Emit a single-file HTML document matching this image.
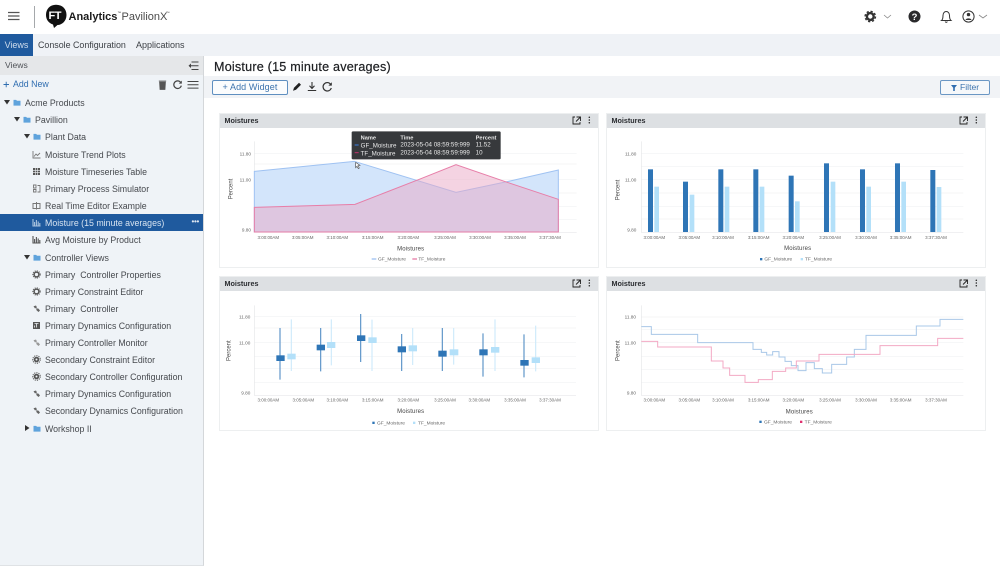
<!DOCTYPE html>
<html lang="en"><head><meta charset="utf-8"><title>Moisture (15 minute averages)</title>
<style>
html,body{margin:0;padding:0;background:#fff}
body{width:1000px;height:577px;overflow:hidden;position:relative;font-family:"Liberation Sans",sans-serif;color:#3d4146}
#wrap{position:absolute;left:0;top:0;width:1000px;height:577px;filter:blur(.35px);overflow:hidden}
.a{position:absolute;white-space:nowrap}
.r{position:absolute;left:0;width:203px;height:17px;line-height:18.5px;font-size:8.8px;color:#46494e;white-space:pre}
.r span{position:absolute;left:45px;top:0}
.r svg{position:absolute;top:4px;left:32px;width:9px;height:9px}
.f span{left:0}
.sel{background:#1f5a9e;color:#d7e3f0}
.card{position:absolute;width:380px;height:155px;border:1px solid #edeff0;background:#fff;box-sizing:border-box}
.card .h{position:absolute;left:0;top:0;right:0;height:14px;background:#dde0e3;font-size:7.2px;font-weight:bold;line-height:14px;color:#2a2c30;padding-left:4.5px}
svg text{font-family:"Liberation Sans",sans-serif}
</style></head><body><div id="wrap">

<svg width="0" height="0" style="position:absolute">
<defs>
<symbol id="line" viewBox="0 0 9 9"><path d="M1 1V8H8.5M2 6.5L4 4L5.5 5.5L8 3" fill="none" stroke="#777" stroke-width=".9"/></symbol>
<symbol id="grid" viewBox="0 0 9 9"><path d="M1 1H8V8H1Z" fill="#555"/><path d="M1 3.4H8M1 5.6H8M3.4 1V8M5.6 1V8" stroke="#f0f3f7" stroke-width=".6"/></symbol>
<symbol id="sim" viewBox="0 0 9 9"><path d="M1.5 1H4V4H1.5ZM1.5 5.5H4V8H1.5ZM5.5 1.5H8V8H5.5" fill="none" stroke="#777" stroke-width=".9"/></symbol>
<symbol id="rt" viewBox="0 0 9 9"><path d="M1 2.5H8V7.5H1ZM4.5 1V8.5" fill="none" stroke="#777" stroke-width="1"/></symbol>
<symbol id="bars" viewBox="0 0 9 9"><path d="M1 1V8H8.5M2.6 7.5V4M4.4 7.5V2M6.2 7.5V3.5M7.8 7.5V5" fill="none" stroke="currentColor" stroke-width="1.1"/></symbol>
<symbol id="gear" viewBox="0 0 9 9"><circle cx="4.5" cy="4.5" r="2.4" fill="none" stroke="#555" stroke-width="1.5"/><circle cx="4.5" cy="4.5" r="3.7" fill="none" stroke="#555" stroke-width=".9" stroke-dasharray="1.1 1.1"/></symbol>
<symbol id="gear2" viewBox="0 0 9 9"><circle cx="4.5" cy="4.5" r="2.8" fill="#555"/><circle cx="4.5" cy="4.5" r="3.8" fill="none" stroke="#555" stroke-width="1" stroke-dasharray="1.2 1"/><circle cx="4.5" cy="4.5" r="1" fill="#eef2f6"/></symbol>
<symbol id="wr" viewBox="0 0 9 9"><path d="M1.5 2.2L4 1.5L5 3.5L3 4.5ZM4 4.3L6.5 4.6L8 6.5L6.5 8L4.6 6.4Z" fill="#666"/></symbol>
<symbol id="wrl" viewBox="0 0 9 9"><path d="M1.5 2.2L4 1.5L5 3.5L3 4.5ZM4 4.3L6.5 4.6L8 6.5L6.5 8L4.6 6.4Z" fill="#999"/></symbol>
<symbol id="dyn" viewBox="0 0 9 9"><path d="M1 1H8V8H1Z" fill="#555"/><path d="M2.5 6.5V4.5M4.5 6.5V2.5M6.5 2.5L2.5 2.5" stroke="#eef2f6" stroke-width=".8"/></symbol>
<symbol id="fold" viewBox="0 0 9 8"><path d="M.5 1H3.5L4.5 2H8.5V7.5H.5Z" fill="#5fa3dc"/></symbol>
</defs></svg>

<!-- top header -->
<svg class="a" style="left:0;top:0" width="1000" height="34">
<path d="M8 12.5H19.5M8 16H19.5M8 19.5H19.5" stroke="#555" stroke-width="1.3"/>
<path d="M34.5 6V28" stroke="#8f9296" stroke-width=".8"/>
<path d="M56 4.8C62.5 4.8 66.5 9 66.5 15C66.5 21 62 25 57.5 25L54 28L53 24.5C48.5 23 46 19.5 46 15C46 9 50 4.8 56 4.8Z" fill="#111"/>
<text x="48.5" y="19" font-size="11" font-weight="bold" fill="#fff" letter-spacing="-.5">FT</text>
<text x="68.5" y="20" font-size="11" font-weight="bold" fill="#1c1c1c">Analytics</text>
<text x="117.5" y="14" font-size="3.5" fill="#333">™</text>
<text x="121.5" y="20" font-size="11" fill="#4b4b4b">PavilionX</text>
<text x="166" y="14" font-size="3.5" fill="#333">™</text>
<!-- gear -->
<circle cx="870.3" cy="16.5" r="3.4" fill="none" stroke="#333" stroke-width="2.4"/>
<circle cx="870.3" cy="16.5" r="5.2" fill="none" stroke="#333" stroke-width="1.4" stroke-dasharray="2.2 1.9"/>
<path d="M884 15L887.5 18L891 15" fill="none" stroke="#888" stroke-width=".8"/>
<circle cx="914.5" cy="16.5" r="6" fill="#2a2a2c"/>
<text x="914.5" y="20" font-size="9.5" font-weight="bold" fill="#fff" text-anchor="middle">?</text>
<path d="M941.5 20.5C942.8 19.5 943 18 943 15.5C943 13 944.5 11.5 946.2 11.5C948 11.5 949.5 13 949.5 15.5C949.5 18 949.8 19.5 951 20.5ZM945.2 21.5C945.5 22.6 947 22.6 947.3 21.5" fill="none" stroke="#333" stroke-width="1"/>
<circle cx="968.5" cy="16.5" r="5.6" fill="none" stroke="#333" stroke-width="1"/>
<circle cx="968.5" cy="14.6" r="1.7" fill="#333"/><path d="M965.5 20C966 17.8 971 17.8 971.5 20Z" fill="#333"/>
<path d="M979 15L983 18L987 15" fill="none" stroke="#888" stroke-width=".8"/>
</svg>

<!-- nav -->
<div class="a" style="left:0;top:34px;width:1000px;height:22px;background:#eff2f6"></div>
<div class="a" style="left:0;top:34px;width:33px;height:22px;background:#1f5a9e;color:#cfdcec;font-size:9px;line-height:22.5px;text-align:center">Views</div>
<div class="a" style="left:38px;top:34px;line-height:22.5px;font-size:8.9px;color:#3d4146">Console Configuration</div>
<div class="a" style="left:136px;top:34px;line-height:22.5px;font-size:9px;color:#3d4146">Applications</div>

<!-- sidebar -->
<div class="a" style="left:0;top:56px;width:203px;height:509px;background:#eff3f7;border-right:1px solid #d4d7da;border-bottom:1.5px solid #dfe2e5"></div>
<div class="a" style="left:0;top:56px;width:203px;height:19px;background:#e5e7e9;font-size:8.6px;line-height:19.5px;color:#505358;text-indent:5px">Views</div>
<svg class="a" style="left:0;top:56px" width="203" height="50">
<path d="M191.5 6H198.5M189 9.8H198.5M191.5 13.5H198.5" stroke="#444" stroke-width="1"/><path d="M191 7.5L188.5 9.8L191 12" fill="#444"/>
<path d="M3.5 28.5H9M6.2 25.7V31.2" stroke="#2f6db0" stroke-width=".9"/>
<path d="M159.5 26H165.5L165 33.5H160ZM158.8 25H166.2" fill="#555" stroke="#555" stroke-width=".7"/>
<path d="M180.5 26.2A3.8 3.8 0 1 0 181.3 29.6" fill="none" stroke="#444" stroke-width="1.2"/><path d="M181.8 24.6V27.6H178.8Z" fill="#444"/>
<path d="M187.5 25.5H198.5M187.5 28.8H198.5M187.5 32.1H198.5" stroke="#444" stroke-width="1"/>
</svg>
<div class="a" style="left:13px;top:79px;font-size:8.8px;line-height:11px;color:#2f6db0">Add New</div>

<div class="r f" style="top:94px"><svg style="left:4px;top:6px;width:6px;height:5px" viewBox="0 0 6 5"><path d="M0 0H6L3 4.5Z" fill="#333"/></svg><svg style="left:13px;top:5px;width:8px;height:7px" viewBox="0 0 9 8"><use href="#fold"/></svg><span style="left:25px">Acme Products</span></div>
<div class="r f" style="top:111px"><svg style="left:14px;top:6px;width:6px;height:5px" viewBox="0 0 6 5"><path d="M0 0H6L3 4.5Z" fill="#333"/></svg><svg style="left:23px;top:5px;width:8px;height:7px" viewBox="0 0 9 8"><use href="#fold"/></svg><span style="left:35px">Pavillion</span></div>
<div class="r" style="top:128px"><svg style="left:24px;top:6px;width:6px;height:5px" viewBox="0 0 6 5"><path d="M0 0H6L3 4.5Z" fill="#333"/></svg><svg style="left:32.5px;top:5px;width:8px;height:7px" viewBox="0 0 9 8"><use href="#fold"/></svg><span>Plant Data</span></div>
<div class="r" style="top:145.5px"><svg viewBox="0 0 9 9"><use href="#line"/></svg><span>Moisture Trend Plots</span></div>
<div class="r" style="top:162.5px"><svg viewBox="0 0 9 9"><use href="#grid"/></svg><span>Moisture Timeseries Table</span></div>
<div class="r" style="top:179.5px"><svg viewBox="0 0 9 9"><use href="#sim"/></svg><span>Primary Process Simulator</span></div>
<div class="r" style="top:197px"><svg viewBox="0 0 9 9"><use href="#rt"/></svg><span>Real Time Editor Example</span></div>
<div class="r sel" style="top:214px"><svg viewBox="0 0 9 9" style="color:#a9c3de"><use href="#bars"/></svg><span>Moisture (15 minute averages)</span><span style="left:191.5px;top:-1px;color:#dfe8f2;font-size:8px;letter-spacing:-.3px">•••</span></div>
<div class="r" style="top:231px"><svg viewBox="0 0 9 9" style="color:#555"><use href="#bars"/></svg><span>Avg Moisture by Product</span></div>
<div class="r" style="top:248.5px"><svg style="left:24px;top:6px;width:6px;height:5px" viewBox="0 0 6 5"><path d="M0 0H6L3 4.5Z" fill="#333"/></svg><svg style="left:32.5px;top:5px;width:8px;height:7px" viewBox="0 0 9 8"><use href="#fold"/></svg><span>Controller Views</span></div>
<div class="r" style="top:265.5px"><svg viewBox="0 0 9 9"><use href="#gear"/></svg><span>Primary  Controller Properties</span></div>
<div class="r" style="top:282.5px"><svg viewBox="0 0 9 9"><use href="#gear"/></svg><span>Primary Constraint Editor</span></div>
<div class="r" style="top:299.5px"><svg viewBox="0 0 9 9"><use href="#wr"/></svg><span>Primary  Controller</span></div>
<div class="r" style="top:316.5px"><svg viewBox="0 0 9 9"><use href="#dyn"/></svg><span>Primary Dynamics Configuration</span></div>
<div class="r" style="top:333.5px"><svg viewBox="0 0 9 9"><use href="#wrl"/></svg><span>Primary Controller Monitor</span></div>
<div class="r" style="top:351px"><svg viewBox="0 0 9 9"><use href="#gear2"/></svg><span>Secondary Constraint Editor</span></div>
<div class="r" style="top:368px"><svg viewBox="0 0 9 9"><use href="#gear2"/></svg><span>Secondary Controller Configuration</span></div>
<div class="r" style="top:385px"><svg viewBox="0 0 9 9"><use href="#wr"/></svg><span>Primary Dynamics Configuration</span></div>
<div class="r" style="top:402px"><svg viewBox="0 0 9 9"><use href="#wr"/></svg><span>Secondary Dynamics Configuration</span></div>
<div class="r" style="top:419.5px"><svg style="left:25px;top:5.5px;width:5px;height:6px" viewBox="0 0 5 6"><path d="M0 0V6L4.5 3Z" fill="#333"/></svg><svg style="left:32.5px;top:5px;width:8px;height:7px" viewBox="0 0 9 8"><use href="#fold"/></svg><span>Workshop II</span></div>

<!-- title + toolbar -->
<div class="a" style="left:214px;top:57.5px;font-size:12.6px;line-height:18px;font-weight:normal;color:#1d1f22;letter-spacing:.21px;-webkit-text-stroke:.2px #1d1f22">Moisture (15 minute averages)</div>
<div class="a" style="left:204px;top:76px;width:796px;height:22px;background:#f1f3f6"></div>
<div class="a" style="left:212px;top:80px;width:76px;height:15px;border:1px solid #5f8fc0;border-radius:2px;background:#fbfcfd;box-sizing:border-box;font-size:9px;line-height:13px;color:#3d74ae;text-align:center;letter-spacing:.1px">+ Add Widget</div>
<svg class="a" style="left:288px;top:78px" width="50" height="18">
<path d="M5 12.8L6 9.8L11 4.8L13 6.8L8 11.8Z" fill="#222"/>
<path d="M24 4V10M21.5 7.8L24 10.4L26.5 7.8M19.8 12.5H28.2" fill="none" stroke="#333" stroke-width="1.1"/>
<path d="M42.6 6.2A4.2 4.2 0 1 0 43.3 10" fill="none" stroke="#333" stroke-width="1.2"/><path d="M43.8 4.2V7.6H40.4Z" fill="#333"/>
</svg>
<div class="a" style="left:940px;top:80px;width:50px;height:14.5px;border:1px solid #6b97c4;border-radius:2px;background:#f6f8fa;box-sizing:border-box;font-size:8.6px;line-height:13px;color:#3d74ae;padding-left:19px">Filter</div>
<svg class="a" style="left:950px;top:84px" width="8" height="8"><path d="M1 1H7L4.8 3.8V7H3.2V3.8Z" fill="#2f6db0"/></svg>

<!-- cards -->
<div class="card" style="left:219px;top:113px"><div class="h">Moistures</div></div>
<div class="card" style="left:606px;top:113px"><div class="h">Moistures</div></div>
<div class="card" style="left:219px;top:276px"><div class="h">Moistures</div></div>
<div class="card" style="left:606px;top:276px"><div class="h">Moistures</div></div>

<svg class="a" style="left:0;top:0" width="1000" height="577">
<defs>
<g id="ico"><path d="M2 1H0V8H7V6M3.5 1H7.5V5M7.5 1L3 5.5" fill="none" stroke="#222" stroke-width=".9"/><circle cx="16.3" cy="1.2" r=".75" fill="#222"/><circle cx="16.3" cy="4" r=".75" fill="#222"/><circle cx="16.3" cy="6.8" r=".75" fill="#222"/></g>
</defs>
<use href="#ico" x="573" y="116"/><use href="#ico" x="960" y="116"/><use href="#ico" x="573" y="279"/><use href="#ico" x="960" y="279"/>

<!-- Chart 1 -->
<g transform="translate(215,108) scale(.33333)" font-size="12" fill="#666">
<path d="M118 137H1085M118 168H1085M118 215H1085M118 255H1085M118 295H1085M118 335H1085" stroke="#f1f2f3" stroke-width="2"/>
<path d="M118 100V373H1085" fill="none" stroke="#e6e7e9" stroke-width="2"/>
<path d="M118 190L418 160L723 253L880 220L1030 186V372H118Z" fill="#d3e5fb" stroke="#9fc2f2" stroke-width="3"/>
<path d="M118 298L420 289L610 215L723 170L880 224L1030 274V372H118Z" fill="#e9a7c5" fill-opacity=".5"/>
<path d="M118 372V298L420 289L610 215L723 170L880 224L1030 274V372Z" fill="none" stroke="#e77ea8" stroke-width="3"/>
<g font-size="14" text-anchor="end"><text x="108" y="142">11.80</text><text x="108" y="220">11.00</text><text x="108" y="370">9.80</text></g>
<text transform="translate(53,243) rotate(-90)" text-anchor="middle" font-size="18" fill="#444">Percent</text>
<g text-anchor="middle" font-size="13.5"><text x="160" y="393">3:00:00AM</text><text x="263" y="393">3:05:00AM</text><text x="367" y="393">3:10:00AM</text><text x="473" y="393">3:15:00AM</text><text x="580" y="393">3:20:00AM</text><text x="690" y="393">3:25:00AM</text><text x="795" y="393">3:30:00AM</text><text x="900" y="393">3:35:00AM</text><text x="1005" y="393">3:37:30AM</text></g>
<text x="587" y="427" text-anchor="middle" font-size="18" fill="#444" letter-spacing=".4">Moistures</text>
<path d="M470 453H484" stroke="#9fc2f2" stroke-width="4"/><text x="489" y="458" font-size="14.5">GF_Moisture</text>
<path d="M592 453H606" stroke="#e77ea8" stroke-width="4"/><text x="610" y="458" font-size="14.5">TF_Moisture</text>
<rect x="410" y="70" width="447" height="84" rx="4" fill="#37393c"/>
<g fill="#e8e8e8" font-size="18.6"><text x="437" y="94" font-weight="bold" font-size="17">Name</text><text x="556" y="94" font-weight="bold" font-size="17">Time</text><text x="782" y="94" font-weight="bold" font-size="17">Percent</text>
<text x="437" y="118">GF_Moisture</text><text x="556" y="116">2023-05-04 08:59:59:999</text><text x="782" y="116">11.52</text>
<text x="437" y="142">TF_Moisture</text><text x="556" y="140">2023-05-04 08:59:59:999</text><text x="782" y="140">10</text></g>
<path d="M419 111H431" stroke="#3b7de0" stroke-width="3"/><path d="M419 134H431" stroke="#c2306c" stroke-width="3"/>
<path d="M422 163V179L426 175L430 182L433 180L429 173L435 172Z" fill="#fff" stroke="#555" stroke-width="2"/>
</g>

<!-- Chart 2 -->
<g transform="translate(604,108) scale(.33333)" font-size="12" fill="#666">
<path d="M112 137H1078M112 176H1078M112 215H1078M112 255H1078M112 295H1078M112 333H1078" stroke="#f1f2f3" stroke-width="2"/>
<path d="M112 100V373H1078" fill="none" stroke="#e6e7e9" stroke-width="2"/>
<g fill="#2e75b6"><rect x="132" y="184" width="15" height="188"/><rect x="237" y="221" width="15" height="151"/><rect x="343" y="184" width="15" height="188"/><rect x="448" y="184" width="15" height="188"/><rect x="554" y="203" width="15" height="169"/><rect x="660" y="166" width="15" height="206"/><rect x="768" y="184" width="15" height="188"/><rect x="873" y="166" width="15" height="206"/><rect x="979" y="186" width="15" height="186"/></g>
<g fill="#b3e0f9"><rect x="151" y="236" width="14" height="136"/><rect x="257" y="260" width="14" height="112"/><rect x="362" y="236" width="14" height="136"/><rect x="467" y="236" width="14" height="136"/><rect x="573" y="280" width="14" height="92"/><rect x="680" y="221" width="14" height="151"/><rect x="787" y="236" width="14" height="136"/><rect x="892" y="221" width="14" height="151"/><rect x="998" y="237" width="14" height="135"/></g>
<g font-size="14" text-anchor="end"><text x="97" y="142">11.80</text><text x="97" y="220">11.00</text><text x="97" y="370">9.80</text></g>
<text transform="translate(47,246) rotate(-90)" text-anchor="middle" font-size="18" fill="#444">Percent</text>
<g text-anchor="middle" font-size="13.5"><text x="151" y="393">3:00:00AM</text><text x="256" y="393">3:05:00AM</text><text x="357" y="393">3:10:00AM</text><text x="464" y="393">3:15:00AM</text><text x="568" y="393">3:20:00AM</text><text x="678" y="393">3:25:00AM</text><text x="786" y="393">3:30:00AM</text><text x="890" y="393">3:35:00AM</text><text x="996" y="393">3:37:30AM</text></g>
<text x="581" y="426" text-anchor="middle" font-size="18" fill="#444" letter-spacing=".4">Moistures</text>
<rect x="468" y="450" width="7" height="7" fill="#2e75b6"/><text x="481" y="457" font-size="14.5">GF_Moisture</text>
<rect x="590" y="450" width="7" height="7" fill="#b3e0f9"/><text x="603" y="457" font-size="14.5">TF_Moisture</text>
</g>

<!-- Chart 3 -->
<g transform="translate(215,272) scale(.33333)" font-size="12" fill="#666">
<path d="M118 134H1083M118 168H1083M118 212H1083M118 253H1083M118 290H1083M118 331H1083" stroke="#f1f2f3" stroke-width="2"/>
<path d="M118 100V370H1083" fill="none" stroke="#e6e7e9" stroke-width="2"/>
<g stroke="#5c94c8" stroke-width="3.5"><path d="M195 168V323M317 168V298M437 126V270M560 186V297M682 168V297M804 184V314M927 187V316"/></g>
<g stroke="#cfeafb" stroke-width="3.5"><path d="M229 142V297M349 142V280M471 143V297M593 168V279M716 168V278M840 142V297M962 161V298"/></g>
<g fill="#2e75b6"><rect x="184" y="250" width="25" height="17"/><rect x="305" y="218" width="25" height="17"/><rect x="426" y="190" width="25" height="17"/><rect x="548" y="223" width="25" height="18"/><rect x="670" y="236" width="25" height="18"/><rect x="793" y="232" width="25" height="18"/><rect x="916" y="264" width="25" height="17"/></g>
<g fill="#b3e0f9"><rect x="217" y="245" width="25" height="17"/><rect x="336" y="210" width="25" height="18"/><rect x="460" y="196" width="25" height="17"/><rect x="581" y="220" width="25" height="18"/><rect x="704" y="232" width="26" height="18"/><rect x="828" y="225" width="25" height="17"/><rect x="950" y="256" width="25" height="17"/></g>
<g font-size="14" text-anchor="end"><text x="106" y="140">11.80</text><text x="106" y="217">11.00</text><text x="106" y="367">9.80</text></g>
<text transform="translate(47,236) rotate(-90)" text-anchor="middle" font-size="18" fill="#444">Percent</text>
<g text-anchor="middle" font-size="13.5"><text x="160" y="389">3:00:00AM</text><text x="265" y="389">3:05:00AM</text><text x="367" y="389">3:10:00AM</text><text x="473" y="389">3:15:00AM</text><text x="580" y="389">3:20:00AM</text><text x="690" y="389">3:25:00AM</text><text x="793" y="389">3:30:00AM</text><text x="900" y="389">3:35:00AM</text><text x="1005" y="389">3:37:30AM</text></g>
<text x="587" y="423" text-anchor="middle" font-size="18" fill="#444" letter-spacing=".4">Moistures</text>
<rect x="472" y="449" width="7" height="7" fill="#2e75b6"/><text x="486" y="457" font-size="14.5">GF_Moisture</text>
<rect x="594" y="449" width="7" height="7" fill="#b3e0f9"/><text x="609" y="457" font-size="14.5">TF_Moisture</text>
</g>

<!-- Chart 4 -->
<g transform="translate(604,272) scale(.33333)" font-size="12" fill="#666">
<path d="M112 135H1078M112 172H1078M112 212H1078M112 254H1078M112 292H1078M112 332H1078" stroke="#f1f2f3" stroke-width="2"/>
<path d="M112 100V370H1078" fill="none" stroke="#e6e7e9" stroke-width="2"/>
<path d="M112 164H142V187H281V212H447V232H472V241H488V249H506V239H525V255H543V268H562V281H582V296H606V272H631V290H655V303H683V277H728V255H751V232H786V190H937V162H1008V142H1078" fill="none" stroke="#a9c8e8" stroke-width="3"/>
<path d="M112 208H161V225H322V267H357V288H377V310H423V331H463V323H505V298H545V288H577V267H645V247H828V221H1001V199H1078" fill="none" stroke="#f3a9c4" stroke-width="3"/>
<g font-size="14" text-anchor="end"><text x="96" y="140">11.80</text><text x="96" y="217">11.00</text><text x="96" y="367">9.80</text></g>
<text transform="translate(46,236) rotate(-90)" text-anchor="middle" font-size="18" fill="#444">Percent</text>
<g text-anchor="middle" font-size="13.5"><text x="151" y="389">3:00:00AM</text><text x="256" y="389">3:05:00AM</text><text x="357" y="389">3:10:00AM</text><text x="464" y="389">3:15:00AM</text><text x="568" y="389">3:20:00AM</text><text x="678" y="389">3:25:00AM</text><text x="786" y="389">3:30:00AM</text><text x="890" y="389">3:35:00AM</text><text x="996" y="389">3:37:30AM</text></g>
<text x="586" y="425" text-anchor="middle" font-size="18" fill="#444" letter-spacing=".4">Moistures</text>
<rect x="466" y="446" width="7" height="7" fill="#2e75b6"/><text x="480" y="454" font-size="14.5">GF_Moisture</text>
<rect x="588" y="446" width="7" height="7" fill="#e0306f"/><text x="602" y="454" font-size="14.5">TF_Moisture</text>
</g>
</svg>

</div></body></html>
